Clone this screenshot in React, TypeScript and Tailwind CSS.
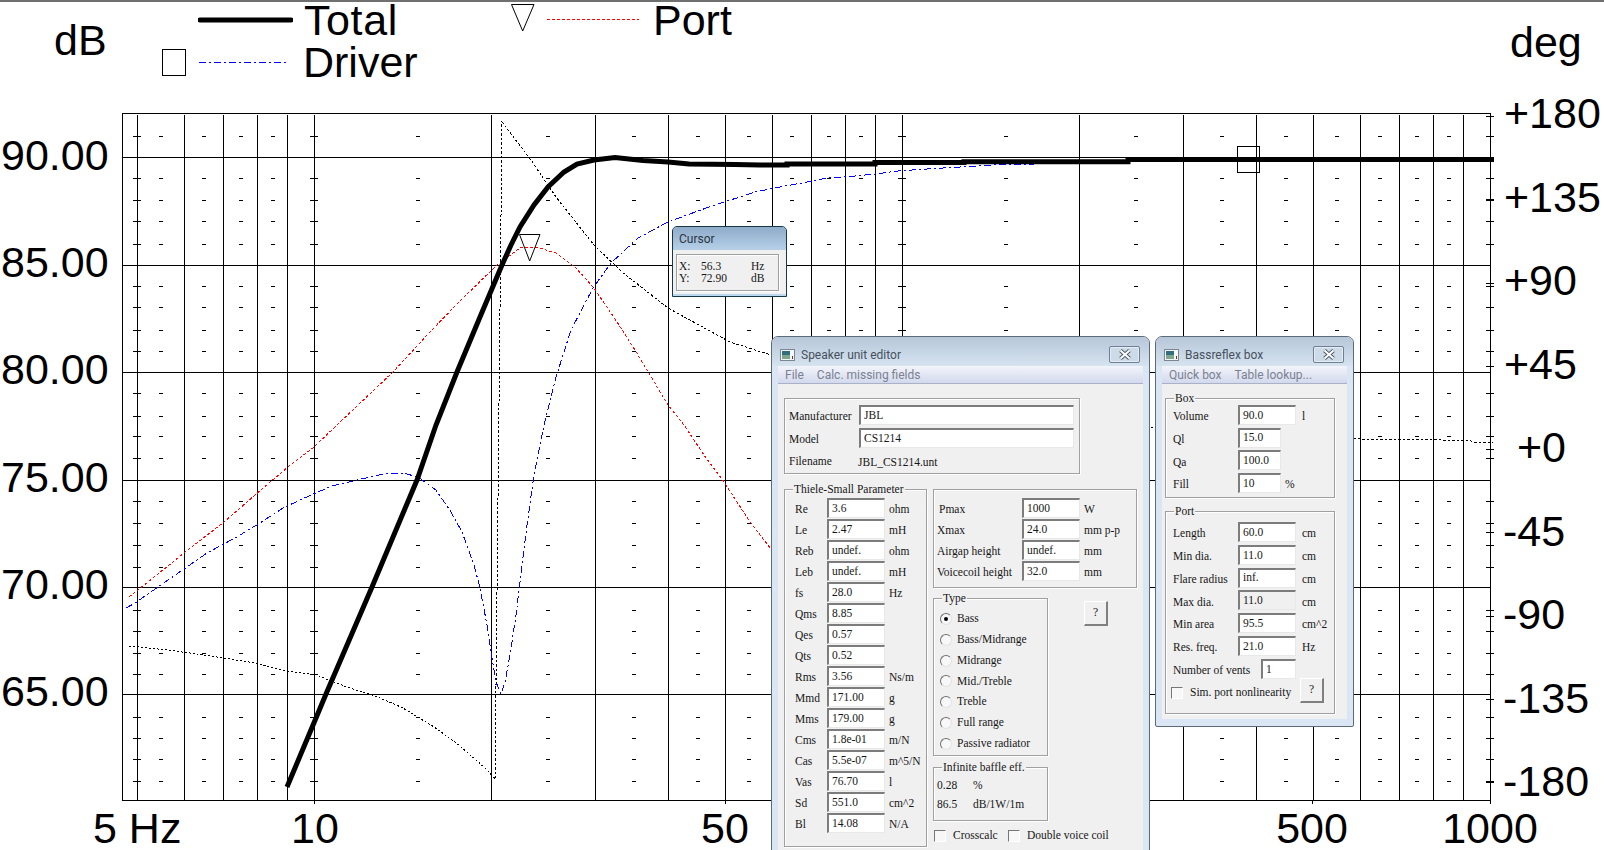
import type { ReactNode } from 'react';

const hzX = (hz: number) => Math.round(137 + 588 * Math.log10(hz / 5));

const majorHz = [5, 6, 7, 8, 9, 10, 20, 30, 40, 50, 60, 70, 80, 90, 100, 200, 300, 400, 500, 600, 700, 800, 900];
const dashHz = [5.5, 6.5, 7.5, 8.5, 15, 25, 35, 45, 55, 65, 75, 85, 150, 250, 350, 450, 550, 650, 750, 850];
const crossHz = [5, 10, 100];
const majorY = [157, 265, 372, 480, 587, 694];
const minorY = [
  136, 178, 200, 221, 244, 286, 307, 330, 351, 393, 416, 436, 458, 501, 523, 545, 567, 610, 631, 653, 674, 717, 738,
  759, 781,
];
const degTicks = [116, 199, 283, 366, 449, 532, 616, 699, 782];

const totalLine =
  '287,787 316,718 326,694 372,587 417,480 436,425 457,372 480,317 502,265 511,245 520,227 534,205 548,187 564,172 577,164 594,160 615,157.5 643,160.5 668,162 689,164 735,164.5 760,165 787,165 787,164 875,164 875,162.5 964,162.5 964,161.8 1128,161.8 1128,159.5 1494,159.5';
const driverLine =
  '126,608 135,603 158,587 184,569 207,553 235,538 260,523 283,508 311,495 332,486 357,480 383,474 403,473 418,477 436,490 451,512 462,532 474,565 480,588 487,625 492,658 496,682 501,694 505,682 510,655 516,615 520,582 527,525 534,475 544,425 556,377 571,330 593,288 611,263 638,238 668,222 709,207 755,192 780,187 802,183 827,178 855,176 875,174 898,171 927,169 960,167 993,165 1035,164';
const portLine =
  '129,597 153,578 184,553 224,522 255,495 288,467 314,447 337,425 393,372 429,333 459,302 497,265 520,248 536,247 556,253 576,268 594,288 617,322 635,350 650,375 668,405 684,425 704,455 724,482 750,522 771,549';
const phaseLow =
  '129,646 168,650 204,655 255,663 286,671 316,675 347,687 378,697 403,708 434,727 459,745 485,768 495,779';
const phaseHigh =
  '495,779 502,122 531,160 556,197 594,245 622,272 668,308 699,325 730,342 771,355 1151,427 1362,439 1413,439.7 1470,440.3 1473,442.3 1493,442.7';

function Chart() {
  return (
    <svg viewBox="122 113 1368 688" className="h-[688px] w-[1368px] shrink-0 overflow-visible" fill="none">
      <g stroke="#000" strokeWidth={1} shapeRendering="crispEdges">
        <path d="M122.5 113.5H1490.5V800.5H122.5Z" />
        {majorHz.map((hz) => (
          <path key={hz} d={`M${hzX(hz) + 0.5} 115V800`} />
        ))}
        {majorY.map((y) => (
          <path key={y} d={`M122 ${y + 0.5}H1490`} />
        ))}
        {minorY.map((y) => (
          <g key={y}>
            {dashHz.map((hz) => (
              <path key={hz} d={`M${hzX(hz) - 2} ${y + 0.5}h4`} />
            ))}
            {crossHz.map((hz) => (
              <path key={hz} d={`M${hzX(hz) - 4} ${y + 0.5}h8`} />
            ))}
            <path d={`M1486 ${y + 0.5}h8`} />
          </g>
        ))}
        {degTicks.map((y) => (
          <path key={y} d={`M1486 ${y + 0.5}h8`} />
        ))}
        <path d="M1312.5 800v4M1490.5 800v4M725.5 800v4M314.5 800v4" />
      </g>

      <g shapeRendering="crispEdges">
        <polyline points={phaseLow} stroke="#000" strokeDasharray="2 2" />
        <polyline points={phaseHigh} stroke="#000" strokeDasharray="2.5 2" />
        <polyline points={portLine} stroke="#f00" strokeDasharray="3 2" />
        <polyline points={driverLine} stroke="#00f" strokeDasharray="7 3 2 3" />
      </g>
      <polyline points={totalLine} stroke="#000" strokeWidth={5} />

      <rect x={1237.5} y={146.5} width={22} height={26} stroke="#000" shapeRendering="crispEdges" />
      <path d="M519.5 234.5H540L529.7 261Z" stroke="#000" />
    </svg>
  );
}

function WindowIcon() {
  return (
    <svg width="15" height="12" viewBox="0 0 15 12" className="shrink-0">
      <rect x="0.5" y="0.5" width="14" height="11" fill="#f4f7fa" stroke="#7d8794" />
      <rect x="2" y="2" width="8" height="8" fill="#2f6f80" />
      <rect x="2" y="6" width="8" height="4" fill="#7fa58c" />
      <rect x="12" y="7" width="1" height="3" fill="#7a2a20" />
    </svg>
  );
}

function CloseButton() {
  return (
    <div className="flex h-[17px] w-[31px] items-center justify-center rounded-[2px] border border-[#6f7f91] bg-[#cddbe9] shadow-[inset_0_0_0_1px_#e4edf5]">
      <svg width="14" height="11" viewBox="0 0 14 11">
        <path d="M2.5 1.5l9 8M11.5 1.5l-9 8" stroke="#4a5664" strokeWidth="3.8" />
        <path d="M2.5 1.5l9 8M11.5 1.5l-9 8" stroke="#fff" strokeWidth="2" />
      </svg>
    </div>
  );
}

function WindowFrame({ title, menu, children, className }: { title: string; menu: string[]; children: ReactNode; className: string }) {
  return (
    <div
      className={`absolute top-[336px] flex flex-col rounded-t-[7px] rounded-b-[2px] border border-[#5d6a78] bg-[#dae6f3] font-['Liberation_Serif',serif] text-[11.5px] leading-none text-[#161616] ${className}`}
    >
      <div className="flex h-[29px] shrink-0 items-center rounded-t-[6px] bg-linear-to-b from-[#b6c7d9] to-[#d6e3f0] pt-[6px] pr-[9px] pl-[8px]">
        <WindowIcon />
        <span className="ml-[6px] font-['Roboto',sans-serif] text-[12px] text-[#46515d]">{title}</span>
        <div className="ml-auto">
          <CloseButton />
        </div>
      </div>
      <div className="mx-[6px] flex h-[18px] shrink-0 items-center gap-[13px] border-b border-[#a9b2c8] bg-linear-to-b from-[#f3f5fb] to-[#d3d9ec] px-[7px] pt-[1px] font-['Roboto',sans-serif] text-[12px] text-[#7b8191]">
        {menu.map((item) => (
          <span key={item}>{item}</span>
        ))}
      </div>
      <div className="mx-[6px] mb-[7px] flex-1 bg-[#f0f0f0]">{children}</div>
    </div>
  );
}

function GroupBox({ legend, className, children }: { legend?: string; className: string; children: ReactNode }) {
  return (
    <div className={`relative border border-[#a0a0a0] shadow-[1px_1px_0_#fff,inset_1px_1px_0_#fff] ${className}`}>
      {legend && <span className="absolute -top-[6px] left-[8px] bg-[#f0f0f0] px-[1px]">{legend}</span>}
      {children}
    </div>
  );
}

function Field({ value, className = 'w-[58px]', disabled }: { value: string; className?: string; disabled?: boolean }) {
  return (
    <div
      className={`flex h-[20px] shrink-0 items-center border-t-2 border-r border-b border-l-2 border-t-[#7c7c7c] border-r-[#e8e8e8] border-b-[#e8e8e8] border-l-[#7c7c7c] pl-[3px] ${disabled ? 'bg-[#f0f0f0]' : 'bg-white'} ${className}`}
    >
      {value}
    </div>
  );
}

// row text sits a little lower than the text in the fields next to it
function RowText({ children, className = '' }: { children?: ReactNode; className?: string }) {
  return <span className={`mt-[4px] ${className}`}>{children}</span>;
}

function HelpButton({ className }: { className: string }) {
  return (
    <div
      className={`flex h-[25px] w-[24px] shrink-0 items-center justify-center border-t border-r-2 border-b-2 border-l border-t-white border-r-[#808080] border-b-[#808080] border-l-white bg-[#f0f0f0] ${className}`}
    >
      ?
    </div>
  );
}

function CheckBox({ label, className = '' }: { label: string; className?: string }) {
  return (
    <div className={`flex items-center ${className}`}>
      <div className="h-[12px] w-[12px] border-t border-r border-b border-l border-t-[#777] border-r-white border-b-white border-l-[#777] bg-[#f7f7f7]" />
      <span className="ml-[7px]">{label}</span>
    </div>
  );
}

const thiele = [
  ['Re', '3.6', 'ohm'],
  ['Le', '2.47', 'mH'],
  ['Reb', 'undef.', 'ohm'],
  ['Leb', 'undef.', 'mH'],
  ['fs', '28.0', 'Hz'],
  ['Qms', '8.85', ''],
  ['Qes', '0.57', ''],
  ['Qts', '0.52', ''],
  ['Rms', '3.56', 'Ns/m'],
  ['Mmd', '171.00', 'g'],
  ['Mms', '179.00', 'g'],
  ['Cms', '1.8e-01', 'm/N'],
  ['Cas', '5.5e-07', 'm^5/N'],
  ['Vas', '76.70', 'l'],
  ['Sd', '551.0', 'cm^2'],
  ['Bl', '14.08', 'N/A'],
];

const mechanics = [
  ['Pmax', '1000', 'W'],
  ['Xmax', '24.0', 'mm p-p'],
  ['Airgap height', 'undef.', 'mm'],
  ['Voicecoil height', '32.0', 'mm'],
];

const speakerTypes = ['Bass', 'Bass/Midrange', 'Midrange', 'Mid./Treble', 'Treble', 'Full range', 'Passive radiator'];

function SpeakerEditor() {
  return (
    <WindowFrame title="Speaker unit editor" menu={['File', 'Calc. missing fields']} className="left-[771px] h-[540px] w-[379px]">
      <div className="px-[6px] pt-[14px]">
        <GroupBox className="flex h-[76px] w-[296px] flex-col gap-[3px] pt-[6px] pl-[4px]">
          <div className="flex items-center">
            <RowText className="w-[70px]">Manufacturer</RowText>
            <Field value="JBL" className="w-[215px]" />
          </div>
          <div className="flex items-center">
            <RowText className="w-[70px]">Model</RowText>
            <Field value="CS1214" className="w-[215px]" />
          </div>
          <div className="flex h-[20px] items-center">
            <span className="mt-[2px] w-[69px]">Filename</span>
            <span className="mt-[4px]">JBL_CS1214.unt</span>
          </div>
        </GroupBox>

        <div className="mt-[15px] flex gap-[6px]">
          <GroupBox legend="Thiele-Small Parameter" className="flex h-[358px] w-[143px] shrink-0 flex-col gap-[1px] pt-[8px] pl-[10px]">
            {thiele.map(([label, value, unit]) => (
              <div key={label} className="flex items-center">
                <RowText className="w-[32px]">{label}</RowText>
                <Field value={value} />
                <RowText className="ml-[4px]">{unit}</RowText>
              </div>
            ))}
          </GroupBox>

          <div className="flex w-[205px] flex-col">
            <GroupBox className="flex h-[99px] flex-col gap-[1px] pt-[8px] pl-[3px]">
              {mechanics.map(([label, value, unit]) => (
                <div key={label} className="flex items-center">
                  <RowText className={label === 'Pmax' ? 'w-[85px] pl-[2px]' : 'w-[85px]'}>{label}</RowText>
                  <Field value={value} />
                  <RowText className="ml-[4px]">{unit}</RowText>
                </div>
              ))}
            </GroupBox>

            <div className="mt-[10px] flex gap-[36px]">
              <div className="flex w-[115px] flex-col">
                <GroupBox legend="Type" className="h-[158px] pt-[9.6px] pl-[6px]">
                  {speakerTypes.map((type, i) => (
                    <div key={type} className="flex h-[20.8px] items-center">
                      <div className="flex h-[12px] w-[12px] items-center justify-center rounded-full border border-t-[#6f6f6f] border-r-[#e2e2e2] border-b-[#e2e2e2] border-l-[#6f6f6f] bg-[#f8f8f8]">
                        {i === 0 && <div className="h-[4px] w-[4px] rounded-full bg-black" />}
                      </div>
                      <span className="ml-[5px]">{type}</span>
                    </div>
                  ))}
                </GroupBox>
                <GroupBox legend="Infinite baffle eff." className="mt-[11px] h-[54px] pt-[8px] pl-[3px]">
                  <div className="flex h-[19px] items-center">
                    <span className="w-[36px]">0.28</span>
                    <span>%</span>
                  </div>
                  <div className="flex h-[19px] items-center">
                    <span className="w-[36px]">86.5</span>
                    <span>dB/1W/1m</span>
                  </div>
                </GroupBox>
              </div>
              <HelpButton className="mt-[3px]" />
            </div>

            <div className="mt-[9px] flex pl-[1px]">
              <CheckBox label="Crosscalc" className="w-[74px]" />
              <CheckBox label="Double voice coil" />
            </div>
          </div>
        </div>
      </div>
    </WindowFrame>
  );
}

const boxFields = [
  ['Volume', '90.0', 'l', 'w-[58px]', 'ml-[6px]'],
  ['Ql', '15.0', '', 'w-[43px]', ''],
  ['Qa', '100.0', '', 'w-[43px]', ''],
  ['Fill', '10', '%', 'w-[43px]', 'ml-[4px]'],
];

const portFields = [
  ['Length', '60.0', 'cm'],
  ['Min dia.', '11.0', 'cm'],
  ['Flare radius', 'inf.', 'cm'],
  ['Max dia.', '11.0', 'cm'],
  ['Min area', '95.5', 'cm^2'],
  ['Res. freq.', '21.0', 'Hz'],
];

function BassreflexBox() {
  return (
    <WindowFrame title="Bassreflex box" menu={['Quick box', 'Table lookup...']} className="left-[1155px] h-[391px] w-[199px]">
      <div className="px-[3px] pt-[14px]">
        <GroupBox legend="Box" className="flex h-[100px] w-[170px] flex-col gap-[2.7px] pt-[6px] pl-[7px]">
          {boxFields.map(([label, value, unit, width, gap]) => (
            <div key={label} className="flex items-center">
              <RowText className="w-[65px]">{label}</RowText>
              <Field value={value} className={width} />
              <RowText className={gap}>{unit}</RowText>
            </div>
          ))}
        </GroupBox>

        <GroupBox legend="Port" className="mt-[13px] h-[203px] w-[170px] pt-[10px]">
          <div className="flex flex-col gap-[2.8px] pl-[7px]">
            {portFields.map(([label, value, unit]) => (
              <div key={label} className="flex items-center">
                <RowText className="w-[65px]">{label}</RowText>
                <Field value={value} disabled={label === 'Max dia.'} />
                <RowText className="ml-[6px]">{unit}</RowText>
              </div>
            ))}
            <div className="flex items-center">
              <RowText className="w-[88px]">Number of vents</RowText>
              <Field value="1" className="w-[35px]" />
            </div>
          </div>
          <div className="flex items-start pr-[10px] pl-[5px]">
            <CheckBox label="Sim. port nonlinearity" className="mt-[8px]" />
            <HelpButton className="-mt-px ml-auto" />
          </div>
        </GroupBox>
      </div>
    </WindowFrame>
  );
}

function CursorWindow() {
  return (
    <div className="absolute top-[226px] left-[672px] flex h-[71px] w-[115px] flex-col rounded-t-[5px] border border-[#17384a] bg-[#bcd9ef] font-['Liberation_Serif',serif] text-[11.5px] leading-none text-[#161616]">
      <div className="flex h-[23px] shrink-0 items-center rounded-t-[4px] bg-linear-to-b from-[#8fabc8] to-[#b6d0e8] pl-[6px] font-['Roboto',sans-serif] text-[12px] text-[#2b3642]">
        Cursor
      </div>
      <div className="mb-[2px] flex-1 bg-[#f0f0f0] pt-[4px] pl-[3px]">
        <GroupBox className="flex h-[37px] w-[103px] flex-col pt-[6px] pl-[2px]">
          <div className="flex h-[12px] items-center">
            <span className="w-[22px]">X:</span>
            <span className="w-[50px]">56.3</span>
            <span>Hz</span>
          </div>
          <div className="flex h-[12px] items-center">
            <span className="w-[22px]">Y:</span>
            <span className="w-[50px]">72.90</span>
            <span>dB</span>
          </div>
        </GroupBox>
      </div>
    </div>
  );
}

const dbLabels = ['90.00', '85.00', '80.00', '75.00', '70.00', '65.00'];

const degLabels = [
  ['+180', 'pl-[14px]'],
  ['+135', 'pl-[14px]'],
  ['+90', 'pl-[14px]'],
  ['+45', 'pl-[14px]'],
  ['+0', 'pl-[27px]'],
  ['-45', 'pl-[13px]'],
  ['-90', 'pl-[13px]'],
  ['-135', 'pl-[13px]'],
  ['-180', 'pl-[13px]'],
];

export default function App() {
  return (
    <div className="relative h-[850px] w-[1604px] overflow-hidden bg-white font-['Liberation_Sans',sans-serif] text-[43px] leading-none text-black">
      <div className="h-[2px] bg-[#707070]" />

      <header className="relative flex h-[111px]">
        <div className="mt-[18px] ml-[54px] flex h-[41px] w-[52px] items-center">dB</div>
        <div className="-mt-[3px] ml-[56px] flex flex-col leading-[36px]">
          <div className="flex h-[42px] items-center pl-[36px]">
            <svg width="95" height="6" className="shrink-0">
              <path d="M2 3H93" stroke="#000" strokeWidth="5" strokeLinecap="round" />
            </svg>
            <span className="ml-[11px] w-[92px] tracking-[0.6px]">Total</span>
            <svg width="24" height="28" className="-mt-[4px] ml-[115px] shrink-0" fill="none">
              <path d="M0.5 0.5H23L11.7 27Z" stroke="#000" />
            </svg>
            <svg width="92" height="3" className="-mt-[1px] ml-[12px] shrink-0">
              <path d="M0 1.5H92" stroke="#f00" strokeDasharray="3 2" />
            </svg>
            <span className="ml-[14px]">Port</span>
          </div>
          <div className="flex h-[41px] items-center">
            <div className="mt-[2px] h-[27px] w-[24px] shrink-0 border border-black" />
            <svg width="90" height="3" className="mt-[2px] ml-[13px] shrink-0">
              <path d="M0 1.5H90" stroke="#00f" strokeDasharray="7 3 2 3" />
            </svg>
            <span className="ml-[14px]">Driver</span>
          </div>
        </div>
        <div className="absolute top-[20px] left-[1510px] flex h-[41px] items-center">deg</div>
      </header>

      <main className="flex h-[688px]">
        <div className="flex w-[122px] shrink-0 flex-col gap-[57.4px] pt-[17px] pl-[1px]">
          {dbLabels.map((label) => (
            <div key={label} className="flex h-[50px] items-center">
              {label}
            </div>
          ))}
        </div>
        <Chart />
        <div className="-mt-[41px] flex flex-col">
          {degLabels.map(([label, pad]) => (
            <div key={label} className={`flex h-[83.5px] shrink-0 items-center ${pad}`}>
              {label}
            </div>
          ))}
        </div>
      </main>

      <footer className="relative">
        <div className="absolute top-[5px] left-[93px] flex h-[44px] items-center">5 Hz</div>
        <div className="absolute top-[5px] left-[315px] flex h-[44px] -translate-x-1/2 items-center">10</div>
        <div className="absolute top-[5px] left-[725px] flex h-[44px] -translate-x-1/2 items-center">50</div>
        <div className="absolute top-[5px] left-[1312px] flex h-[44px] -translate-x-1/2 items-center">500</div>
        <div className="absolute top-[5px] left-[1490px] flex h-[44px] -translate-x-1/2 items-center">1000</div>
      </footer>

      <CursorWindow />
      <SpeakerEditor />
      <BassreflexBox />
    </div>
  );
}
